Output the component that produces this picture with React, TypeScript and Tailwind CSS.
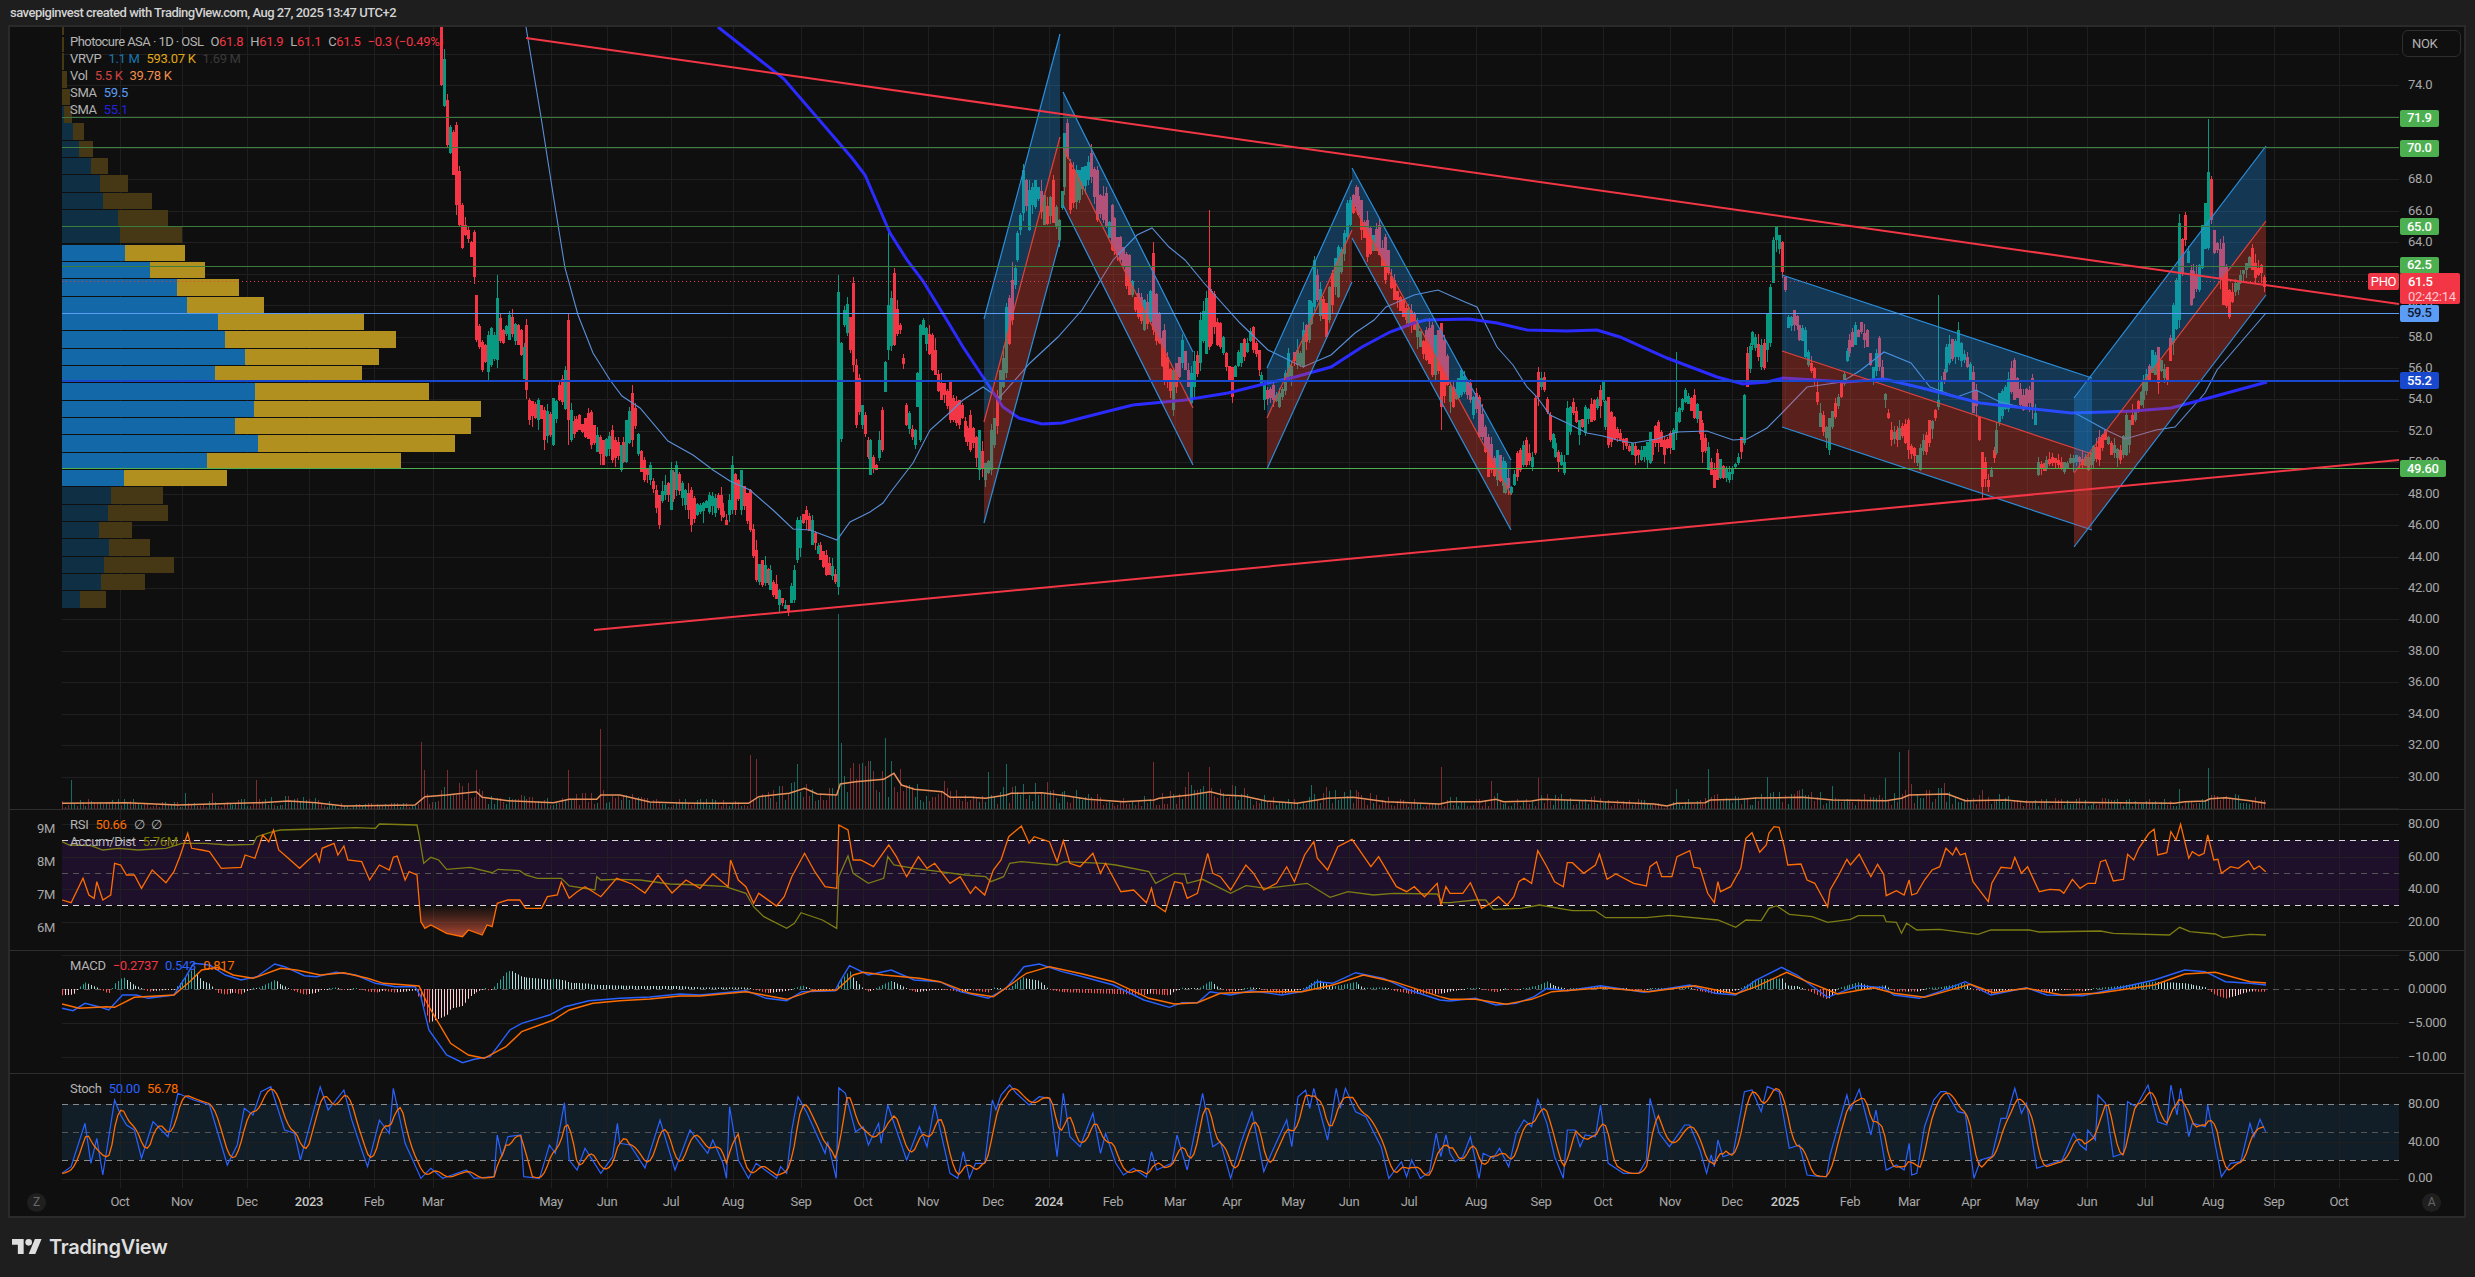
import React from "react";

type P = [number, number];
const pts = (a: number[], ox: number, sx: number, oy: number, maxX = 1e9): P[] => {
  const r: P[] = [];
  for (let i = 0; i < a.length; i += 2) if (a[i] < maxX) r.push([ox + a[i] / sx, oy + a[i + 1] / 3]);
  return r;
};
const interp = (p: P[], x: number) => {
  if (x <= p[0][0]) return p[0][1];
  for (let i = 1; i < p.length; i++) {
    if (x <= p[i][0]) {
      const t = (x - p[i - 1][0]) / (p[i][0] - p[i - 1][0] || 1);
      return p[i - 1][1] + t * (p[i][1] - p[i - 1][1]);
    }
  }
  return p[p.length - 1][1];
};
const line = (p: P[]) => "M" + p.map(([x, y]) => `${x.toFixed(1)} ${y.toFixed(1)}`).join("L");
const pair = (a: number[]): P[] => {
  const r: P[] = [];
  for (let i = 0; i < a.length; i += 2) r.push([a[i], a[i + 1]]);
  return r;
};
let seed = 12345;
const rnd = () => {
  seed = (seed + 0x6d2b79f5) | 0;
  let t = Math.imul(seed ^ (seed >>> 15), 1 | seed);
  t = (t + Math.imul(t ^ (t >>> 7), 61 | t)) ^ t;
  return ((t ^ (t >>> 14)) >>> 0) / 4294967296;
};

const STEP = 2.94;
const LAST = 2264;
const keys: number[][] = [[441,-60,85],[447,100,145],[456,125,205],[462,205,248],[466,225,235],[473,232,277],[477,295,340],[483,342,370],[489,335,372],[498,298,360],[503,330,343],[510,315,340],[518,325,345],[525,325,390],[530,400,420],[537,400,420],[545,410,440],[552,398,445],[560,385,400],[568,320,420],[572,410,440],[580,415,430],[590,412,445],[603,440,465],[612,430,460],[620,445,470],[627,420,462],[633,393,440],[643,460,480],[650,465,480],[658,495,525],[665,485,495],[670,470,510],[677,465,490],[685,490,505],[692,490,525],[700,505,512],[710,495,512],[720,495,515],[727,520,525],[732,465,510],[740,470,510],[750,490,530],[755,550,580],[762,560,585],[770,570,590],[780,590,605],[787,605,612],[793,570,600],[798,520,560],[805,510,520],[813,520,545],[820,545,560],[827,555,575],[837,575,585],[839,292,587],[845,310,325],[852,283,365],[857,365,425],[863,405,425],[870,440,475],[876,465,470],[882,410,450],[888,305,350],[893,273,345],[900,325,330],[907,405,425],[914,430,445],[920,325,440],[923,320,335],[933,335,370],[940,383,400],[950,381,420],[958,400,425],[969,415,450],[978,430,470],[985,463,480],[992,430,470],[1000,370,400],[1007,307,373],[1012,280,320],[1018,233,260],[1024,170,213],[1030,190,230],[1036,180,207],[1044,195,225],[1052,180,223],[1060,220,240],[1064,133,187],[1066,123,157],[1070,163,210],[1080,170,200],[1090,153,177],[1098,170,220],[1105,193,227],[1112,205,250],[1119,237,260],[1128,255,295],[1137,293,317],[1145,300,330],[1153,253,330],[1163,330,380],[1173,370,410],[1183,340,363],[1190,373,403],[1200,320,363],[1210,268,347],[1220,323,347],[1232,367,397],[1240,343,363],[1252,327,350],[1258,350,370],[1264,383,400],[1272,385,400],[1279,393,407],[1289,353,380],[1296,350,365],[1303,330,367],[1309,300,340],[1315,260,307],[1325,303,337],[1337,247,297],[1347,203,237],[1355,187,207],[1362,200,230],[1368,220,257],[1378,225,255],[1386,237,280],[1394,280,300],[1402,300,317],[1414,313,330],[1425,330,360],[1432,325,375],[1441,323,407],[1453,387,407],[1461,370,395],[1469,383,400],[1479,397,437],[1489,437,477],[1497,450,480],[1505,463,493],[1512,487,493],[1517,453,477],[1525,440,465],[1532,457,467],[1535,398,453],[1538,372,397],[1543,377,390],[1550,415,440],[1555,443,457],[1560,455,465],[1565,462,473],[1568,408,455],[1573,402,413],[1580,420,435],[1585,407,433],[1595,400,420],[1602,382,400],[1607,397,445],[1620,433,440],[1632,443,455],[1642,450,460],[1650,432,463],[1658,422,443],[1665,440,455],[1672,430,450],[1677,412,433],[1685,390,402],[1695,395,418],[1703,423,452],[1708,447,470],[1715,470,488],[1718,453,480],[1728,472,480],[1738,457,463],[1744,395,443],[1747,353,387],[1753,332,345],[1760,345,367],[1765,343,368],[1769,287,343],[1773,240,283],[1777,227,240],[1782,242,272],[1786,277,290],[1788,317,328],[1794,310,325],[1805,330,357],[1813,368,378],[1821,413,427],[1828,418,450],[1834,403,417],[1842,383,397],[1848,340,353],[1855,325,345],[1861,322,332],[1867,330,347],[1872,367,380],[1878,338,367],[1882,367,380],[1890,430,440],[1897,430,440],[1907,420,450],[1916,455,463],[1920,448,470],[1930,420,443],[1937,400,407],[1947,347,372],[1957,330,357],[1968,357,367],[1974,372,413],[1980,417,440],[1983,452,487],[1989,480,487],[1995,430,453],[2000,393,422],[2014,360,400],[2022,395,410],[2031,378,407],[2035,413,425],[2039,462,475],[2052,457,463],[2064,462,472],[2075,455,462],[2087,457,470],[2098,437,460],[2106,430,440],[2112,443,455],[2120,450,460],[2127,415,455],[2133,415,425],[2144,380,400],[2152,350,373],[2157,347,383],[2167,367,382],[2173,305,343],[2180,223,320],[2184,215,240],[2190,270,305],[2198,265,290],[2207,172,248],[2210,179,220],[2213,230,253],[2217,243,250],[2222,243,305],[2230,290,317],[2240,275,283],[2248,257,268],[2252,248,270],[2255,263,278],[2260,265,273],[2264,277,287]];
const idxOf = (x: number) => Math.round((LAST - x) / STEP);
const xOf = (i: number) => Math.round(LAST - i * STEP);
const forceGreen = [839, 1007, 1018, 1024, 1064, 1200, 888, 2180, 2207, 1769, 1773, 1744, 2173, 1337, 1315, 498, 920, 1568, 1650, 1677];
const forceRed = [852, 893, 1066, 1153, 2210, 2222, 2184, 1441, 1535, 568, 633, 473, 477, 2264, 1210, 1983, 1974, 1607];
const wickOverride: Record<number, [number, number]> = { 839: [275, 595], 498: [275, 368], 888: [227, 360], 2207: [119, 250], 1210: [210, 350], 1677: [352, 440], 1937: [295, 410], 568: [314, 445], 1012: [262, 325], 1441: [323, 430], 1983: [452, 500] };

const exact = new Map<number, number[]>();
keys.forEach((k) => exact.set(idxOf(k[0]), k));
const keyTop: P[] = keys.map((k) => [k[0], k[1]]);
const keyBot: P[] = keys.map((k) => [k[0], k[2]]);
const keyMid: P[] = keys.map((k) => [k[0], (k[1] + k[2]) / 2]);
const gIdx = new Set(forceGreen.map(idxOf));
const rIdx = new Set(forceRed.map(idxOf));
const wickIdx = new Map(Object.entries(wickOverride).map(([k, v]) => [idxOf(Number(k)), v] as const));

let redWick = "", greenWick = "", redBody = "", greenBody = "";
const candleColor = new Map<number, "r" | "g">();
for (let i = 0; i <= idxOf(441); i++) {
  const x = xOf(i);
  const xx = LAST - i * STEP;
  let t: number, b: number;
  const k = exact.get(i);
  if (k) { t = k[1]; b = k[2]; }
  else {
    const T = interp(keyTop, xx), B = interp(keyBot, xx);
    const len = (B - T) * (0.4 + rnd() * 0.5);
    t = T + rnd() * (B - T - len);
    b = t + len;
  }
  const slope = interp(keyMid, xx - 6) - interp(keyMid, xx + 6);
  let g = rnd() < (slope > 0 ? 0.72 : 0.28);
  if (gIdx.has(i)) g = true;
  if (rIdx.has(i)) g = false;
  candleColor.set(i, g ? "g" : "r");
  const wo = wickIdx.get(i);
  const wt = wo ? wo[0] : t - rnd() * rnd() * 13;
  const wb = wo ? wo[1] : b + rnd() * rnd() * 13;
  const h = Math.max(2, Math.round(b - t));
  const body = `M${x - 1} ${Math.round(t)}h3v${h}h-3z`;
  const wick = `M${x} ${wt.toFixed(0)}h1v${(wb - wt).toFixed(0)}h-1z`;
  if (g) { greenBody += body; greenWick += wick; } else { redBody += body; redWick += wick; }
}

const rsi: P[] = [
  ...pts([157,360,180,368,210,295,225,345,238,355,245,305,260,360,280,345,290,250,305,255,320,285,340,285,358,325,385,270,420,308,440,275,455,230,475,160,485,205,510,210,530,215,560,265,610,262,620,225,645,235,665,165,680,185,692,150,705,210,725,230,758,265,780,240,800,220,808,245,815,205,845,190,855,225,870,198,880,240,915,245,935,300,960,255,985,270,995,232,1005,228,1025,300,1035,275,1055,285,1065,425,1075,445,1090,435,1130,460,1170,470,1185,450,1220,465,1232,435,1245,440,1258,370,1285,360,1315,360,1330,385,1370,385,1385,350,1410,345,1420,305,1440,355,1460,335,1480,320,1520,350,1560,295], 0, 2.53, 780),
  [632, 884], [645, 893], [658, 875], [672, 893], [686, 880],
  ...pts([0,505,25,462,55,500,60,420,75,480,90,500,105,550,115,520,150,558,165,530,180,470,205,400,225,455,245,500,268,505,272,315,290,330,300,420,315,420,340,440,370,375,385,410,405,470,428,410,445,445,460,430,490,490,510,470,530,520,540,500,558,525,575,450,590,420,605,350,630,318,645,370,655,350,685,365,700,425,712,362,725,430,745,440,770,400,785,460,795,430,825,515,850,510,875,548,885,505,893,555,912,575,930,485,945,490,955,535,975,520,995,400,1005,460,1020,470,1040,510,1070,435,1085,460,1105,510,1130,490,1150,440,1165,485,1185,405,1203,365,1210,415,1230,450,1250,380,1278,358,1315,440,1330,410,1365,500,1385,515,1400,500,1420,530,1445,490,1452,555,1462,500], 700, 1.96, 720),
  ...pts([0,520,25,520,40,488,62,565,80,550,95,530,112,555,125,530,135,485,145,475,160,490,172,392,190,440,205,485,222,500,230,428,240,428,262,460,285,435,293,402,308,478,325,462,360,490,385,498,392,440,405,425,415,470,435,470,445,410,470,392,478,442,490,445,505,520,518,548,525,485,530,515,550,500,570,445,580,355,592,338,607,397,620,375,625,340,635,320,645,322,655,380,662,435,688,432,700,480,715,490,740,560,745,510,760,470,778,418,785,435,802,403,825,470,838,433,850,463,855,527,875,512,890,525,900,480,905,525,915,520,930,480,945,450,960,440,972,385,985,405,992,383,1000,405,1010,400,1025,485,1040,515,1055,545,1062,490,1080,442,1100,445,1107,412,1120,460,1132,440,1155,515,1175,508,1195,510,1203,520,1220,478,1235,505,1250,490,1265,490,1275,425,1285,420,1300,483,1320,478,1328,403,1340,420,1350,385,1370,340,1380,328,1387,405,1405,398,1413,335,1423,360,1432,313,1448,415,1455,395,1468,407,1478,400,1485,345,1497,420,1505,418,1512,460,1530,440,1545,445,1565,422], 1450, 1.96, 720),
  ...pts([462,268,478,258,497,275], 2100, 3, 780),
];
const accum: P[] = [
  ...pts([157,185,175,195,230,197,260,210,300,205,350,210,420,205,460,190,520,190,580,195,640,193,650,170,690,155,710,150,800,147,900,143,950,145,960,132,1055,135,1060,165,1072,250,1090,232,1110,240,1130,268,1190,262,1245,278,1260,268,1315,272,1330,285,1360,295,1420,295,1440,318,1505,330,1510,290,1520,300,1560,298], 0, 2.53, 780),
  [640, 880], [670, 884],
  ...pts([0,495,50,500,90,520,105,560,125,590,170,625,185,610,198,578,240,600,268,625,272,470,290,408,300,460,330,490,360,475,368,410,380,435,420,445,470,455,520,465,560,470,570,485,595,470,607,430,630,425,700,435,715,425,790,430,815,435,880,455,893,490,930,460,950,462,955,490,985,478,1040,520,1070,497,1110,505,1190,490,1235,532,1270,515,1320,525,1360,520,1445,522,1455,548], 700, 1.96, 720),
  ...pts([0,548,50,540,70,540,85,568,140,565,175,555,240,572,285,572,305,593,385,593,430,586,525,600,560,622,580,600,610,602,625,565,640,557,665,583,710,590,740,607,785,598,800,587,850,587,855,605,875,607,885,640,895,610,915,630,960,628,1035,643,1060,630,1135,630,1155,636,1275,633,1300,640,1410,645,1430,622,1450,635,1500,642,1515,653,1568,643], 1450, 1.96, 720),
  [2266, 935],
];
const macdB: P[] = [
  ...pts([157,685,185,692,215,670,250,680,275,690,310,645,345,645,375,655,440,645,470,590,490,550,530,555,570,585,610,600,650,590,695,552,720,560,770,587,800,590,850,577,900,585,950,610,1000,620,1050,620,1065,650,1085,750,1130,825,1170,848,1200,838,1240,830,1290,750,1320,730,1390,705,1430,680,1490,662,1568,655], 0, 2.53, 780),
  [650, 997], [680, 994],
  ...pts([0,825,90,812,130,835,170,842,200,815,265,812,272,790,293,737,330,765,375,750,420,780,470,785,510,815,565,835,600,805,635,740,665,732,710,755,750,770,810,795,870,840,920,862,945,848,975,848,1000,815,1040,825,1080,812,1140,825,1180,815,1210,785,1240,790,1285,758,1340,775,1390,810,1450,840], 700, 1.96, 720),
  ...pts([0,843,50,835,90,855,130,850,165,830,190,805,230,812,295,797,380,817,470,795,520,820,560,825,600,780,650,742,680,765,740,832,800,797,850,803,870,825,920,835,960,815,1010,785,1060,825,1130,803,1170,825,1240,827,1300,808,1380,780,1440,750,1480,755,1520,785,1568,790], 1450, 1.96, 720),
  [2266, 985],
];
const macdO: P[] = [
  ...pts([157,672,200,685,270,680,290,682,340,652,440,645,480,605,510,570,550,562,590,585,640,595,710,565,750,570,810,585,870,578,930,595,970,610,1060,618,1085,680,1140,790,1185,825,1225,835,1280,800,1320,755,1400,720,1440,690,1500,670,1568,662], 0, 2.53, 780),
  [650, 999], [680, 996],
  ...pts([0,828,90,815,170,838,220,812,268,810,300,765,320,757,360,765,430,775,470,785,530,820,575,830,640,760,685,740,750,762,810,785,880,835,930,852,975,848,1020,820,1100,815,1180,815,1240,795,1300,765,1360,785,1450,830], 700, 1.96, 720),
  ...pts([0,838,50,838,110,853,160,838,200,815,300,803,390,815,480,797,560,822,600,800,660,757,700,785,760,822,830,803,870,820,930,832,1020,793,1065,818,1130,805,1200,825,1270,820,1380,795,1440,762,1500,757,1568,785], 1450, 1.96, 720),
  [2266, 983],
];
const stochK: P[] = [
  ...pts([157,1180,180,1160,215,1030,230,1150,245,1075,260,1185,290,960,305,1005,320,1035,340,1050,358,1135,387,1025,425,1070,450,940,490,960,530,975,575,1155,600,1095,618,985,640,1005,660,935,685,920,720,1050,745,1060,760,1140,810,920,830,990,870,930,890,1020,915,1110,930,1160,960,1020,985,1060,995,925,1025,1090,1065,1195,1090,1165,1120,1195,1180,1170,1200,1195,1250,1190,1258,1065,1270,1130,1285,1070,1318,1065,1325,1190,1365,1195,1390,1095,1405,1120,1428,968,1440,1140,1460,1170,1480,1105,1520,1180,1550,1130,1562,1030,1568,1090], 0, 2.53, 780),
  [630, 1145], [645, 1168], [660, 1120], [675, 1170], [690, 1130],
  ...pts([0,1270,15,1300,25,1260,45,1330,52,1375,58,1160,75,1320,95,1375,110,1330,150,1375,158,1340,170,1360,180,1230,192,1130,210,1180,245,1300,250,1265,267,1375,272,1103,285,1120,305,1235,320,1220,330,1275,350,1210,355,1270,368,1155,405,1320,430,1220,445,1280,460,1155,490,1360,505,1375,516,1295,528,1375,540,1330,558,1330,573,1140,580,1170,590,1125,607,1095,620,1120,645,1155,665,1130,685,1135,700,1310,712,1120,725,1250,745,1280,770,1180,785,1300,795,1240,815,1330,830,1365,850,1345,875,1372,885,1295,895,1350,925,1330,935,1245,955,1350,985,1120,1005,1280,1020,1265,1040,1375,1060,1270,1082,1175,1105,1355,1120,1300,1150,1200,1160,1280,1172,1130,1187,1110,1195,1165,1203,1105,1230,1260,1247,1105,1255,1165,1265,1105,1285,1175,1305,1190,1335,1280,1350,1375,1375,1325,1385,1370,1395,1320,1412,1375,1430,1355,1443,1240,1452,1310,1462,1245], 700, 1.96, 720),
  ...pts([0,1300,10,1325,25,1310,40,1250,57,1375,65,1300,85,1315,97,1285,115,1340,130,1240,145,1200,160,1220,172,1138,190,1210,205,1310,222,1375,230,1230,245,1230,255,1280,265,1245,285,1250,295,1155,310,1330,340,1360,370,1360,385,1320,392,1135,410,1240,430,1280,460,1215,470,1215,490,1290,503,1360,512,1305,518,1340,525,1260,535,1310,555,1300,577,1115,592,1110,610,1175,622,1100,645,1115,665,1285,685,1275,700,1365,725,1370,738,1370,745,1305,778,1125,785,1170,802,1108,825,1245,835,1170,855,1350,875,1335,890,1350,900,1270,905,1365,915,1360,930,1220,948,1140,962,1115,972,1115,995,1175,1010,1180,1027,1375,1040,1320,1062,1310,1080,1195,1090,1195,1107,1105,1120,1180,1130,1150,1150,1345,1200,1320,1222,1240,1235,1275,1247,1290,1250,1230,1265,1260,1270,1125,1285,1150,1300,1310,1320,1300,1328,1145,1345,1160,1368,1095,1387,1205,1405,1215,1413,1095,1425,1185,1432,1105,1448,1250,1455,1210,1480,1220,1485,1155,1500,1275,1512,1370,1530,1330,1550,1325,1568,1210], 1450, 1.96, 720),
  ...pts([462,1070,480,1018,497,1055], 2100, 3, 780),
];
const stochD: P[] = (() => {
  const r: P[] = [];
  for (let x = 62; x <= 2266; x += STEP) {
    const v = (interp(stochK, x) + interp(stochK, x - STEP) + interp(stochK, x - 2 * STEP) + interp(stochK, x - 3 * STEP)) / 4;
    r.push([x, v]);
  }
  return r;
})();
const volMA: P[] = [
  ...pts([157,70,320,68,450,75,600,70,660,68,730,63,800,68,870,78,1050,75,1075,50,1130,45,1205,35,1220,52,1285,62,1400,68,1440,58,1510,58,1520,45,1568,45], 0, 2.53, 780),
  [650, 802], [680, 803],
  ...pts([0,250,95,250,115,230,175,220,205,205,230,222,268,225,275,192,305,185,360,178,380,160,395,195,420,208,475,215,490,232,530,232,560,235,600,225,610,220,670,218,720,228,760,238,830,245,890,240,900,235,960,225,1000,215,1025,225,1065,228,1110,243,1170,250,1230,235,1280,232,1345,245,1450,252], 700, 1.96, 720),
  ...pts([0,245,60,245,90,238,105,245,160,243,180,238,275,242,300,245,400,252,425,258,445,250,500,248,510,240,570,238,600,234,690,232,750,240,855,242,885,235,900,225,975,222,1010,242,1090,240,1130,246,1420,250,1440,245,1480,243,1490,236,1520,233,1568,242], 1450, 1.96, 720),
  ...pts([497,70], 2100, 3, 780),
];
const sma1: P[] = pair([526,27,541,117,554,200,565,268,578,315,593,353,610,380,622,396,640,408,668,441,693,455,713,470,730,481,750,490,773,510,793,529,810,530,837,540,850,522,870,512,883,503,890,493,913,463,930,430,947,415,963,400,983,387,999,398,1030,363,1058,337,1082,310,1113,260,1137,235,1152,228,1169,247,1185,260,1204,283,1240,323,1268,350,1303,367,1331,355,1355,333,1374,320,1386,307,1414,295,1438,290,1465,302,1477,307,1497,347,1513,365,1527,387,1537,397,1550,415,1567,423,1587,433,1603,436,1617,440,1633,443,1657,439,1677,432,1707,431,1733,440,1747,439,1767,428,1782,413,1807,387,1842,382,1861,370,1884,352,1911,363,1930,387,1957,397,1976,390,2000,402,2025,408,2075,413,2106,430,2125,439,2156,430,2175,427,2205,393,2217,370,2266,313]);
const sma2: P[] = pair([718,27,784,79,852,158,865,175,890,233,907,260,923,281,948,322,963,347,985,380,1003,407,1019,418,1042,424,1062,423,1105,412,1133,405,1185,400,1228,393,1268,383,1295,377,1331,367,1362,347,1390,332,1414,323,1426,320,1469,319,1497,323,1527,330,1567,331,1597,330,1620,337,1667,358,1717,377,1743,384,1767,382,1783,378,1815,380,1846,382,1884,379,1922,388,1980,403,2025,408,2071,413,2106,412,2133,411,2171,408,2194,402,2267,382]);

const spikes: number[][] = [[750,755],[756,759],[839,614],[842,743],[852,763],[886,738],[798,764],[1007,764],[987,772],[1154,762],[1187,772],[1208,767],[1311,785],[1327,787],[1440,767],[1490,781],[1537,778],[1677,789],[1709,769],[1767,777],[1833,786],[1886,778],[1900,752],[1907,750],[1912,784],[1982,790],[2180,789],[2207,768],[70,780],[186,793],[211,793],[255,780],[421,742],[425,770],[447,770],[476,770],[568,770],[600,729],[522,795]];
const spikeMap = new Map(spikes.map((s) => [idxOf(s[0]), s[1]]));
let volR = "", volG = "", hGreen = "", hPale = "", hRed = "", hPink = "";
let prevH = 0;
for (let i = idxOf(62); i >= 0; i--) {
  const x = xOf(i);
  const xx = LAST - i * STEP;
  const base = 809 - interp(volMA, xx);
  const top = spikeMap.get(i) ?? 809 - base * (0.35 + rnd() * 1.4);
  const c = candleColor.get(i) ?? (rnd() < 0.5 ? "g" : "r");
  const b = `M${x} ${top.toFixed(0)}h1V809h-1z`;
  if (c === "g") volG += b; else volR += b;
  const h = (interp(macdO, xx) - interp(macdB, xx)) * 1.45;
  const up = h > prevH;
  prevH = h;
  const hh = Math.max(1, Math.abs(h));
  const r = h >= 0 ? `M${x} ${(989 - hh).toFixed(1)}h1v${hh.toFixed(1)}h-1z` : `M${x} 989h1v${hh.toFixed(1)}h-1z`;
  if (h >= 0 && up) hGreen += r;
  else if (h >= 0) hPale += r;
  else if (!up) hRed += r;
  else hPink += r;
}

const oversold: P[] = rsi.filter((p) => p[0] > 420 && p[0] < 497 && p[1] >= 905);

const months: [string, number, boolean?][] = [["Oct",120],["Nov",182],["Dec",247],["2023",309,true],["Feb",374],["Mar",433],["May",551],["Jun",607],["Jul",671],["Aug",733],["Sep",801],["Oct",863],["Nov",928],["Dec",993],["2024",1049,true],["Feb",1113],["Mar",1175],["Apr",1232],["May",1293],["Jun",1349],["Jul",1409],["Aug",1476],["Sep",1541],["Oct",1603],["Nov",1670],["Dec",1732],["2025",1785,true],["Feb",1850],["Mar",1909],["Apr",1971],["May",2027],["Jun",2087],["Jul",2145],["Aug",2213],["Sep",2274],["Oct",2339]];

const priceY = (p: number) => 85 + (74 - p) * 15.72;
const mainLabels: [string, number][] = [["74.0",74],["68.0",68],["66.0",66],["64.0",64],["60.0",60],["58.0",58],["56.0",56],["54.0",54],["52.0",52],["50.00",50],["48.00",48],["46.00",46],["44.00",44],["42.00",42],["40.00",40],["38.00",38],["36.00",36],["34.00",34],["32.00",32],["30.00",30]];
const mainTags: { t: string; y: number; bg: string; fg: string }[] = [
  { t: "71.9", y: 118, bg: "bg-[#4caf50]", fg: "text-white" },
  { t: "70.0", y: 148, bg: "bg-[#4caf50]", fg: "text-white" },
  { t: "65.0", y: 226.5, bg: "bg-[#4caf50]", fg: "text-white" },
  { t: "62.5", y: 265, bg: "bg-[#4caf50]", fg: "text-white" },
  { t: "59.5", y: 313, bg: "bg-[#5b9cf6]", fg: "text-[#0f1830]" },
  { t: "55.2", y: 380.5, bg: "bg-[#1848cc]", fg: "text-white" },
  { t: "49.60", y: 468.5, bg: "bg-[#4caf50]", fg: "text-white" },
];
const hLines: [number, string, number][] = [[117.5,"#3a7a3d",1],[147.5,"#3d803f",1],[226.5,"#3a7d3c",1],[266.5,"#3a7d3c",1],[313.5,"#5b9cf6",1],[381,"#1848cc",2],[468.5,"#4caf50",1]];

const vpRows: [number, number, number, number, boolean][] = [
  [27,8,62,64,true],[37,15,62,64,true],[53,17,62,64,true],[71,17,62,67,true],[89,16,62,70,true],[106,17,64,72,true],[123,17,73,84,true],[141,16,79,93,true],[158,16,91,108,true],[175,17,100,128,true],[193,16,103,152,true],[210,16,118,168,true],[227,16,120,182,true],
  [245,16,125,185,false],[262,16,150,205,false],[279,17,177,239,false],[297,16,187,264,false],[314,16,218,364,false],[331,17,225,396,false],[349,16,245,379,false],[366,16,215,362,false],[383,17,255,429,false],[401,16,254,481,false],[418,16,235,471,false],[435,17,258,455,false],[453,16,207,401,false],[470,16,124,227,false],
  [487,17,111,163,true],[505,16,108,168,true],[522,16,99,132,true],[539,17,109,150,true],[557,16,104,174,true],[574,16,101,145,true],[591,17,80,106,true],
];

type Ch = { x: [number, number]; u: [number, number]; m: [number, number]; l: [number, number] };
const channels: Ch[] = [
  { x: [984,1060], u: [319,34], m: [422,137], l: [523,240] },
  { x: [1063,1193], u: [92,352], m: [147,408], l: [205,465] },
  { x: [1267,1352], u: [368,180], m: [418,230], l: [469,282] },
  { x: [1352,1511], u: [168,460], m: [203,495], l: [238,530] },
  { x: [1782,2092], u: [275,378], m: [351,454], l: [427,530] },
  { x: [2074,2266], u: [398,146], m: [473,221], l: [547,295] },
];

const gridV = months.map((m) => m[1]);
const VGrid = ({ y1, y2 }: { y1: number; y2: number }) => (
  <g stroke="#1f1f1f" strokeWidth="1">
    {gridV.map((x, i) => (<line key={i} x1={x + 0.5} x2={x + 0.5} y1={y1} y2={y2} />))}
  </g>
);
const HGrid = ({ ys }: { ys: number[] }) => (
  <g stroke="#202020" strokeWidth="1">
    {ys.map((y, i) => (<line key={i} x1={62} x2={2399} y1={Math.round(y) + 0.5} y2={Math.round(y) + 0.5} />))}
  </g>
);
const PaneSvg = ({ top, h, children }: { top: number; h: number; children: React.ReactNode }) => (
  <svg width={2389} height={h} viewBox={`10 ${top} 2389 ${h}`} className="block shrink-0">{children}</svg>
);
const AxisLabel = ({ y, top, text }: { y: number; top: number; text: string }) => (
  <span className="absolute left-[9px] -translate-y-1/2 text-[#a8a8a8]" style={{ top: y - top }}>{text}</span>
);

const Legend = ({ children }: { children: React.ReactNode }) => (
  <div className="flex items-center gap-[7px] h-[17px] whitespace-nowrap">{children}</div>
);

export default function App() {
  const mainGrid: number[] = [];
  for (let p = 76; p >= 28; p -= 2) mainGrid.push(priceY(p));
  return (
    <div className="w-[2475px] h-[1277px] bg-[#1e1e1e] flex flex-col overflow-hidden text-[13px] tracking-[-0.3px] font-['Roboto','Liberation_Sans',sans-serif]">
      <div className="h-[25px] pl-[10px] flex items-center text-[13px] tracking-[-0.5px] font-medium text-[#d2d2d2] whitespace-nowrap">savepiginvest created with TradingView.com, Aug 27, 2025 13:47 UTC+2</div>

      <div className="ml-[8px] w-[2458px] h-[1193px] border-2 border-[#2a2a2a] bg-[#0f0f0f] flex flex-col shrink-0">
        {/* main pane */}
        <div className="relative h-[783px] flex border-b border-[#2e2e2e] shrink-0">
          <PaneSvg top={27} h={782}>
            <VGrid y1={27} y2={809} />
            <HGrid ys={mainGrid} />
            {vpRows.map(([y, h, b, g, dim], i) => (
              <g key={i}>
                <rect x={62} y={y} width={b - 62} height={h} fill={dim ? "#0f2f45" : "#1369a8"} />
                <rect x={b} y={y} width={g - b} height={h} fill={dim ? "#473815" : "#b2901f"} />
              </g>
            ))}
            <path d={volR} fill="#7d2c31" />
            <path d={volG} fill="#176c62" />
            <path d={line(volMA)} fill="none" stroke="#e8905a" strokeWidth="1.5" />
            <path d={redWick} fill="#f23645" shapeRendering="crispEdges" />
            <path d={greenWick} fill="#089981" shapeRendering="crispEdges" />
            <path d={redBody} fill="#f23645" shapeRendering="crispEdges" />
            <path d={greenBody} fill="#089981" shapeRendering="crispEdges" />
            <path d={line(sma1)} fill="none" stroke="#5b8fd8" strokeWidth="1.1" />
            <path d={line(sma2)} fill="none" stroke="#2b2bff" strokeWidth="3" />
            {channels.map((c, i) => (
              <g key={i}>
                <polygon points={`${c.x[0]},${c.u[0]} ${c.x[1]},${c.u[1]} ${c.x[1]},${c.m[1]} ${c.x[0]},${c.m[0]}`} fill="rgba(33,150,243,0.3)" />
                <polygon points={`${c.x[0]},${c.m[0]} ${c.x[1]},${c.m[1]} ${c.x[1]},${c.l[1]} ${c.x[0]},${c.l[0]}`} fill="rgba(244,67,54,0.33)" />
                <line x1={c.x[0]} y1={c.u[0]} x2={c.x[1]} y2={c.u[1]} stroke="#2b8fdc" strokeWidth="1.2" />
                <line x1={c.x[0]} y1={c.m[0]} x2={c.x[1]} y2={c.m[1]} stroke="#e2423a" strokeWidth="1.2" />
                <line x1={c.x[0]} y1={c.l[0]} x2={c.x[1]} y2={c.l[1]} stroke="#2b8fdc" strokeWidth="1.2" />
              </g>
            ))}
            {hLines.map(([y, c, w], i) => (
              <line key={i} x1={62} x2={2399} y1={y} y2={y} stroke={c} strokeWidth={w} />
            ))}
            <line x1={62} x2={2399} y1={281.5} y2={281.5} stroke="#e0414d" strokeWidth="1" strokeDasharray="1 3" />
            <line x1={526} y1={38} x2={2399} y2={304} stroke="#f23645" strokeWidth="2" />
            <line x1={594} y1={630} x2={2399} y2={460} stroke="#f23645" strokeWidth="2" />
          </PaneSvg>

          <div className="absolute left-[60px] top-[6px] flex flex-col text-[#b4b4b4]">
            <Legend>
              <span className="tracking-[-0.55px]">Photocure ASA · 1D · OSL</span>
              <span>O<span className="text-[#f23645]">61.8</span></span>
              <span>H<span className="text-[#f23645]">61.9</span></span>
              <span>L<span className="text-[#f23645]">61.1</span></span>
              <span>C<span className="text-[#f23645]">61.5</span></span>
              <span className="text-[#f23645]">−0.3 (−0.49%)</span>
            </Legend>
            <Legend><span>VRVP</span><span className="text-[#1976b0]">1.1 M</span><span className="text-[#e0a818]">593.07 K</span><span className="text-[#3a3a3a]">1.69 M</span></Legend>
            <Legend><span>Vol</span><span className="text-[#d0433f]">5.5 K</span><span className="text-[#ef8d4d]">39.78 K</span></Legend>
            <Legend><span>SMA</span><span className="text-[#5b9cf6]">59.5</span></Legend>
            <Legend><span>SMA</span><span className="text-[#2222dd]">55.1</span></Legend>
          </div>

          <div className="relative w-[65px] shrink-0">
            {mainLabels.map(([t, p]) => (<AxisLabel key={t} y={priceY(p)} top={27} text={t} />))}
            {mainTags.map((g) => (
              <div key={g.t} className={`absolute left-[1px] h-[17px] px-[7px] flex items-center rounded-[2px] font-medium ${g.bg} ${g.fg}`} style={{ top: g.y - 8.5 - 27 }}>{g.t}</div>
            ))}
            <div className="absolute left-[1px] top-[246px] w-[60px] h-[31px] pl-[8px] rounded-[2px] bg-[#f23645] flex flex-col justify-center leading-[15px]">
              <span className="text-white font-medium">61.5</span>
              <span className="text-[#ffc9cf]">02:42:14</span>
            </div>
            <div className="absolute left-[3px] top-[3px] w-[59px] h-[27px] pl-[9px] flex items-center rounded-md border border-[#2e2e2e] text-[#b2b2b2]">NOK</div>
          </div>
          <div className="absolute left-[2358px] top-[246px] h-[17px] w-[31px] rounded-[2px] bg-[#f23645] text-white flex items-center justify-center">PHO</div>
        </div>

        {/* RSI + Accum/Dist pane */}
        <div className="relative h-[141px] flex border-b border-[#2e2e2e] shrink-0">
          <PaneSvg top={810} h={140}>
            <defs>
              <linearGradient id="os" x1="0" y1="0" x2="0" y2="1">
                <stop offset="0" stopColor="#a0402a" stopOpacity="0" />
                <stop offset="1" stopColor="#c0503a" stopOpacity="0.9" />
              </linearGradient>
            </defs>
            <rect x={62} y={840} width={2337} height={65} fill="#1e0f2b" />
            <VGrid y1={810} y2={950} />
            <HGrid ys={[824, 857, 889, 922]} />
            <polygon points={`420,905 ${oversold.map((p) => p.join(",")).join(" ")} 497,905`} fill="url(#os)" />
            <line x1={62} x2={2399} y1={840.5} y2={840.5} stroke="#d8d8d8" strokeDasharray="6 5" />
            <line x1={62} x2={2399} y1={873.5} y2={873.5} stroke="#555" strokeDasharray="6 5" />
            <line x1={62} x2={2399} y1={905.5} y2={905.5} stroke="#d8d8d8" strokeDasharray="6 5" />
            <path d={line(accum)} fill="none" stroke="#7d7d14" strokeWidth="1.3" />
            <path d={line(rsi)} fill="none" stroke="#ff6d00" strokeWidth="1.3" />
          </PaneSvg>
          <div className="absolute left-[60px] top-[6px] flex flex-col text-[#b4b4b4]">
            <Legend><span>RSI</span><span className="text-[#ff6d00]">50.66</span><span>∅</span><span>∅</span></Legend>
            <Legend><span>Accum/Dist</span><span className="text-[#808000]">5.76M</span></Legend>
          </div>
          {([["9M",829],["8M",862],["7M",895],["6M",928]] as [string, number][]).map(([t, y]) => (
            <span key={t} className="absolute left-[27px] -translate-y-1/2 text-[#a8a8a8]" style={{ top: y - 810 }}>{t}</span>
          ))}
          <div className="relative w-[65px] shrink-0">
            {([["80.00",824],["60.00",857],["40.00",889],["20.00",922]] as [string, number][]).map(([t, y]) => (<AxisLabel key={t} y={y} top={810} text={t} />))}
          </div>
        </div>

        {/* MACD pane */}
        <div className="relative h-[123px] flex border-b border-[#2e2e2e] shrink-0">
          <PaneSvg top={951} h={122}>
            <VGrid y1={951} y2={1073} />
            <HGrid ys={[955, 1023, 1057]} />
            <line x1={62} x2={2399} y1={989.5} y2={989.5} stroke="#555" strokeDasharray="6 5" />
            <path d={hGreen} fill="#26a69a" />
            <path d={hPale} fill="#b2dfdb" />
            <path d={hRed} fill="#ff5252" />
            <path d={hPink} fill="#ffcdd2" />
            <path d={line(macdB)} fill="none" stroke="#2962ff" strokeWidth="1.4" />
            <path d={line(macdO)} fill="none" stroke="#ff6d00" strokeWidth="1.4" />
          </PaneSvg>
          <div className="absolute left-[60px] top-[6px] flex flex-col text-[#b4b4b4]">
            <Legend><span>MACD</span><span className="text-[#f23645]">−0.2737</span><span className="text-[#2962ff]">0.543</span><span className="text-[#ff6d00]">0.817</span></Legend>
          </div>
          <div className="relative w-[65px] shrink-0">
            {([["5.000",957],["0.0000",989],["−5.000",1023],["−10.00",1057]] as [string, number][]).map(([t, y]) => (<AxisLabel key={t} y={y} top={951} text={t} />))}
          </div>
        </div>

        {/* Stochastic pane */}
        <div className="relative h-[114px] flex shrink-0">
          <PaneSvg top={1074} h={114}>
            <rect x={62} y={1104} width={2337} height={56} fill="#111e27" />
            <VGrid y1={1074} y2={1188} />
            <HGrid ys={[1142, 1179]} />
            <line x1={62} x2={2399} y1={1104.5} y2={1104.5} stroke="#8a8a8a" strokeDasharray="6 5" />
            <line x1={62} x2={2399} y1={1132.5} y2={1132.5} stroke="#555" strokeDasharray="6 5" />
            <line x1={62} x2={2399} y1={1160.5} y2={1160.5} stroke="#8a8a8a" strokeDasharray="6 5" />
            <path d={line(stochK)} fill="none" stroke="#2962ff" strokeWidth="1.2" />
            <path d={line(stochD)} fill="none" stroke="#ff6d00" strokeWidth="1.3" />
          </PaneSvg>
          <div className="absolute left-[60px] top-[6px] flex flex-col text-[#b4b4b4]">
            <Legend><span>Stoch</span><span className="text-[#2962ff]">50.00</span><span className="text-[#ff6d00]">56.78</span></Legend>
          </div>
          <div className="relative w-[65px] shrink-0">
            {([["80.00",1104],["40.00",1142],["0.00",1178]] as [string, number][]).map(([t, y]) => (<AxisLabel key={t} y={y} top={1074} text={t} />))}
          </div>
        </div>

        {/* time axis */}
        <div className="relative flex-1 flex items-center justify-between pl-[17px] pr-[23px]">
          <div className="w-[19px] h-[19px] rounded-full bg-[#1f1f1f] text-[#666] text-[12px] flex items-center justify-center">Z</div>
          <div className="w-[19px] h-[19px] rounded-full bg-[#1f1f1f] text-[#666] text-[12px] flex items-center justify-center">A</div>
          {months.map(([t, x, bold], i) => (
            <span key={i} className={`absolute -translate-x-1/2 ${bold ? "text-[#c8c8c8] font-medium" : "text-[#a8a8a8]"}`} style={{ left: x - 10 }}>{t}</span>
          ))}
        </div>
      </div>

      <div className="flex-1 pl-[12px] flex items-center gap-[7px] text-[#dedede] pb-[2px]">
        <svg width="30" height="15" viewBox="0 4 36 18" className="shrink-0">
          <path fill="#dedede" d="M14 22H7V11H0V4h14v18zM28 22h-8l7.5-18h8L28 22z" />
          <circle fill="#dedede" cx="20" cy="8" r="4" />
        </svg>
        <span className="text-[20px] font-semibold font-['Inter','Liberation_Sans',sans-serif] tracking-[-0.3px]">TradingView</span>
      </div>
    </div>
  );
}
